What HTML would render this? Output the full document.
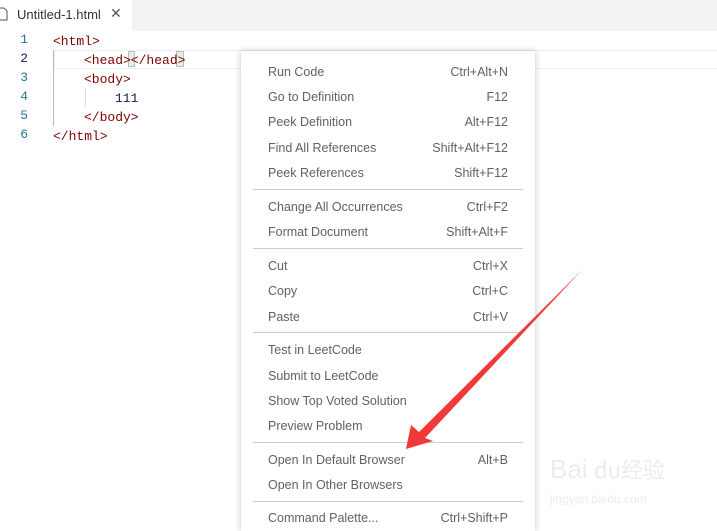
<!DOCTYPE html>
<html><head><meta charset="utf-8"><style>
body{margin:0;width:717px;height:519px;overflow:hidden;background:#fff;position:relative;font-family:"Liberation Sans",sans-serif}
.tabbar{position:absolute;left:0;top:0;width:717px;height:31px;background:#f3f3f3}
.tab{position:absolute;left:0;top:0;width:132px;height:31px;background:#fff;font-size:13px;color:#333}
.code{position:absolute;font-family:"Liberation Mono",monospace;font-size:13px;line-height:19px}
.ln{position:absolute;left:0;width:28px;text-align:right;color:#237893;font-family:"Liberation Mono",monospace;font-size:13px}
.t{color:#800000}
.menu{position:absolute;left:241px;top:51px;width:294px;height:480px;background:#fff;box-shadow:0 0 6px rgba(0,0,0,.25)}
.it{position:absolute;left:27px;width:240px;font-size:12.5px;color:#616161;line-height:16px}
.it span{position:absolute;right:0}
.sep{position:absolute;left:12px;width:270px;height:1px;background:#ccc}
</style></head><body>
<div class="tabbar"><div class="tab">
<svg style="position:absolute;left:0;top:7px" width="8" height="14"><path d="M0 1H4L7 4V13H0" fill="none" stroke="#555"/></svg>
<span style="position:absolute;left:17px;top:7px">Untitled-1.html</span>
<span style="position:absolute;left:110px;top:5px;font-size:14px;color:#555">✕</span></div></div>
<div style="position:absolute;left:54px;top:50px;width:663px;height:17px;border:1px solid #eee;border-right:none"></div>
<div style="position:absolute;left:53px;top:50px;width:1px;height:76px;background:#bbb"></div>
<div style="position:absolute;left:85px;top:88px;width:1px;height:19px;background:#ddd"></div>
<div style="position:absolute;left:128px;top:51px;width:7px;height:16px;background:#e6ece6;border:1px solid #bbb;box-sizing:border-box"></div>
<div style="position:absolute;left:176px;top:51px;width:8px;height:16px;background:#e6ece6;border:1px solid #bbb;box-sizing:border-box"></div>
<div class="ln" style="top:32px">1</div><div class="ln" style="top:51px;color:#0b216f">2</div><div class="ln" style="top:70px">3</div><div class="ln" style="top:89px">4</div><div class="ln" style="top:108px">5</div><div class="ln" style="top:127px">6</div>
<div class="code" style="left:53px;top:32px"><span class="t">&lt;html&gt;</span></div>
<div class="code" style="left:84px;top:51px"><span class="t">&lt;head&gt;&lt;/head&gt;</span></div>
<div class="code" style="left:84px;top:70px"><span class="t">&lt;body&gt;</span></div>
<div class="code" style="left:115px;top:89px;color:#0b1f52">111</div>
<div class="code" style="left:84px;top:108px"><span class="t">&lt;/body&gt;</span></div>
<div class="code" style="left:53px;top:127px"><span class="t">&lt;/html&gt;</span></div>
<div class="menu">
<div class="it" style="top:13px">Run Code<span>Ctrl+Alt+N</span></div>
<div class="it" style="top:38px">Go to Definition<span>F12</span></div>
<div class="it" style="top:63px">Peek Definition<span>Alt+F12</span></div>
<div class="it" style="top:89px">Find All References<span>Shift+Alt+F12</span></div>
<div class="it" style="top:114px">Peek References<span>Shift+F12</span></div>
<div class="sep" style="top:138px"></div>
<div class="it" style="top:148px">Change All Occurrences<span>Ctrl+F2</span></div>
<div class="it" style="top:173px">Format Document<span>Shift+Alt+F</span></div>
<div class="sep" style="top:197px"></div>
<div class="it" style="top:207px">Cut<span>Ctrl+X</span></div>
<div class="it" style="top:232px">Copy<span>Ctrl+C</span></div>
<div class="it" style="top:258px">Paste<span>Ctrl+V</span></div>
<div class="sep" style="top:281px"></div>
<div class="it" style="top:291px">Test in LeetCode</div>
<div class="it" style="top:317px">Submit to LeetCode</div>
<div class="it" style="top:342px">Show Top Voted Solution</div>
<div class="it" style="top:367px">Preview Problem</div>
<div class="sep" style="top:391px"></div>
<div class="it" style="top:401px">Open In Default Browser<span>Alt+B</span></div>
<div class="it" style="top:426px">Open In Other Browsers</div>
<div class="sep" style="top:450px"></div>
<div class="it" style="top:459px">Command Palette...<span>Ctrl+Shift+P</span></div>
</div>
<svg style="position:absolute;left:0;top:0" width="717" height="519"><polygon points="406,449 411,425 419,432 582,270 425,438 433,441" fill="#f03a3a"/>
<text x="550" y="478" font-size="26" fill="#ececec" font-family="Liberation Sans">Bai</text><text x="594" y="478" font-size="22" fill="#ececec" font-family="Noto Sans CJK SC">du经验</text>
<text x="550" y="503" font-size="12" fill="#ececec">jingyan.baidu.com</text></svg>
</body></html>
